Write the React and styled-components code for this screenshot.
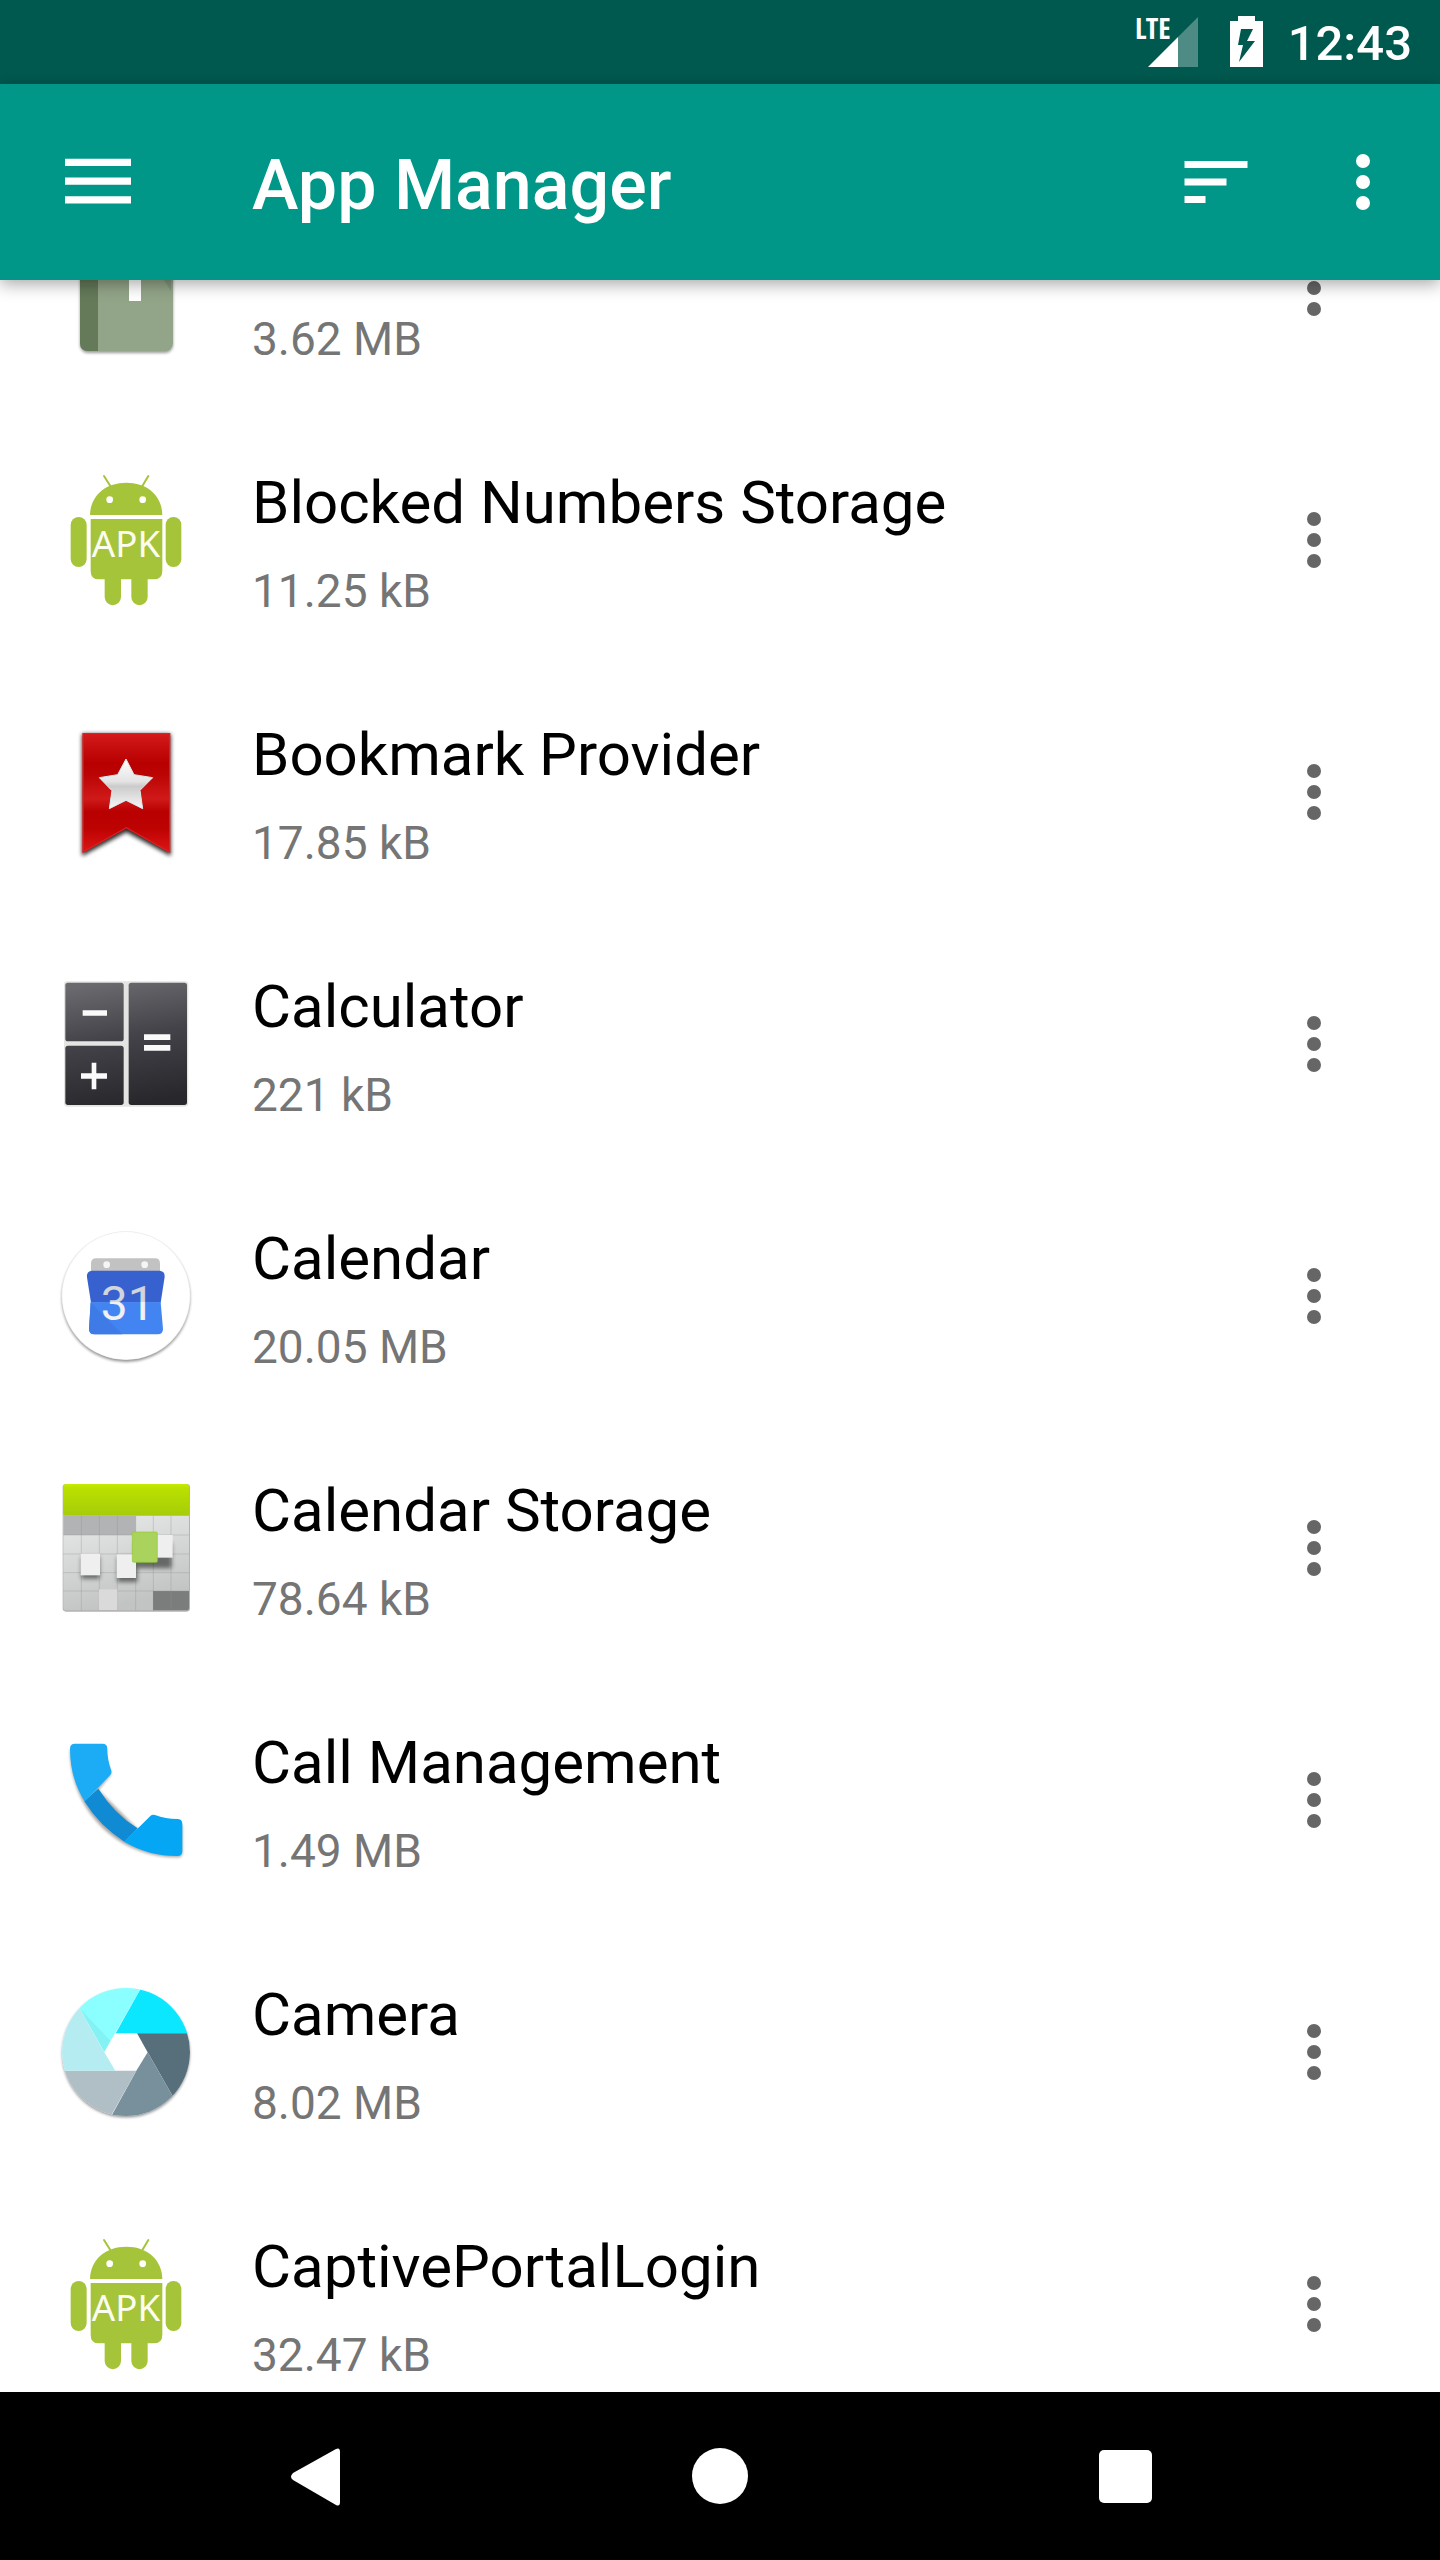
import React, { useLayoutEffect, useRef } from "react"
import styled, { createGlobalStyle } from "styled-components"


const GlobalStyle = createGlobalStyle`
  * {
    box-sizing: border-box;
  }
  body {
    margin: 0;
    background: #fff;
    font-family: Roboto, "Liberation Sans", sans-serif;
  }
`

const Screen = styled.div`
  display: flex;
  flex-direction: column;
  width: 100%;
  height: 100vh;
  background: #fff;
`

const StatusBar = styled.div`
  display: flex;
  flex: none;
  align-items: center;
  justify-content: flex-end;
  height: 84px;
  padding-right: 28px;
  background: #00594f;
  color: #fff;
`

const SignalIcon = styled.svg`
  width: 64px;
  height: 84px;
  margin-right: 28px;
`

const BatteryIcon = styled.svg`
  width: 36px;
  height: 84px;
  margin-right: 24px;
`

const Clock = styled.time`
  padding-top: 4px;
  font-size: 49px;
  font-weight: 500;
  line-height: 80px;
`

const Toolbar = styled.header`
  display: flex;
  flex: none;
  align-items: center;
  height: 196px;
  padding: 0 28px 0 48px;
  background: #009788;
  color: #fff;
  box-shadow: 0 4px 16px rgba(0, 0, 0, 0.35);
  z-index: 1;
`

const IconButton = styled.button`
  display: flex;
  flex: none;
  align-items: center;
  justify-content: center;
  width: ${props => props.$width || 100}px;
  height: 112px;
  padding: 0;
  border: 0;
  background: none;
  color: inherit;
  cursor: pointer;
  svg {
    width: 84px;
    height: 84px;
    fill: currentColor;
  }
`

const Actions = styled.div`
  display: flex;
  gap: 42px;
`

const Heading = styled.h1`
  flex: 1;
  margin: 0 0 0 104px;
  padding-top: 6px;
  font-size: 70px;
  font-weight: 500;
  line-height: 84px;
`

const Scroller = styled.main`
  flex: 1;
  min-height: 0;
  overflow-y: auto;
  scrollbar-width: none;
`

const List = styled.ul`
  margin: 0;
  padding: 0;
  list-style: none;
`

const Row = styled.li`
  display: flex;
  align-items: center;
  height: 252px;
  padding: 0 76px 0 56px;
  color: #666;
`

const AppIcon = styled.svg`
  flex: none;
  width: 140px;
  height: 140px;
  overflow: visible;
`

const Info = styled.div`
  flex: 1;
  min-width: 0;
  margin-left: 56px;
  padding-top: 14px;
`

const Name = styled.p`
  height: 84px;
  margin: 0;
  color: #000;
  font-size: 60px;
  line-height: 84px;
`

const Size = styled.p`
  margin: 4px 0 0;
  color: #757575;
  font-size: 46px;
  line-height: 84px;
`

const NavBar = styled.nav`
  display: flex;
  flex: none;
  align-items: center;
  justify-content: center;
  height: 168px;
  gap: 294px;
  background: #000;
  color: #fff;
`

const Dots = () => (
  <svg viewBox="0 0 24 24" aria-hidden="true">
    <circle cx="12" cy="6" r="2" />
    <circle cx="12" cy="12" r="2" />
    <circle cx="12" cy="18" r="2" />
  </svg>
)

const BookArt = () => (
  <AppIcon viewBox="56 218 140 140" aria-hidden="true">
    <defs>
      <filter id="bookShadow" x="-10%" y="-10%" width="120%" height="120%">
        <feGaussianBlur stdDeviation="1.5" />
      </filter>
    </defs>
    <rect x="80" y="226" width="93" height="127" rx="8" opacity="0.4" filter="url(#bookShadow)" />
    <rect x="80" y="224" width="93" height="127" rx="8" fill="#92a588" />
    <path d="M98 224v127H88q-8 0-8-8V232q0-8 8-8z" fill="#647a59" />
    <path d="M129 240h12v61h-12z" fill="#fff" />
    <path d="M164 280h7v11z" fill="#82957c" />
  </AppIcon>
)

const ApkArt = () => (
  <AppIcon viewBox="48 60 420 420" aria-hidden="true">
    <g fill="#a6c43a">
      <path d="M150 195C151 138 195 98 259 98s107 40 108 97z" />
      <path d="M192 78l19 30M325 78l-18 30" stroke="#a6c43a" strokeWidth="6" strokeLinecap="round" />
      <path d="M152 207h215v155q0 26-26 26h-18v53a24 24 0 0 1-49 0v-53h-31v53a24 24 0 0 1-49 0v-53h-18q-24 0-24-26z" />
      <rect x="92" y="201" width="48" height="150" rx="24" />
      <rect x="377" y="201" width="47" height="150" rx="23" />
    </g>
    <circle cx="209" cy="149" r="10" fill="#fff" />
    <circle cx="308" cy="149" r="10" fill="#fff" />
    <text x="258" y="321" textAnchor="middle" fill="#fbfdf0" fontFamily="Noto Sans, sans-serif" fontSize="110">APK</text>
  </AppIcon>
)

const BookmarkArt = () => (
  <AppIcon viewBox="48 66 420 420" aria-hidden="true">
    <defs>
      <linearGradient id="ribbon" x1="0" y1="0" x2="0" y2="1">
        <stop offset="0" stopColor="#d41a1a" />
        <stop offset="0.25" stopColor="#b80000" />
        <stop offset="0.35" stopColor="#bb0404" />
        <stop offset="0.55" stopColor="#d01a1a" />
        <stop offset="0.66" stopColor="#b90000" />
        <stop offset="0.8" stopColor="#bd0202" />
        <stop offset="1" stopColor="#dc1616" />
      </linearGradient>
      <linearGradient id="star" x1="0" y1="0" x2="0" y2="1">
        <stop offset="0" stopColor="#fff" />
        <stop offset="0.45" stopColor="#e4e4e4" />
        <stop offset="0.55" stopColor="#cbcbcb" />
        <stop offset="1" stopColor="#f8f8f8" />
      </linearGradient>
      <filter id="soft" x="-20%" y="-20%" width="140%" height="140%">
        <feGaussianBlur stdDeviation="7" />
      </filter>
    </defs>
    <path d="M126 102h266v366l-133-72-133 72z" opacity="0.85" filter="url(#soft)" />
    <path d="M129 101h260v355l-130-73-130 73z" fill="url(#ribbon)" stroke="#e31e1e" strokeWidth="4" />
    <path d="M258 177l24 47 56 9-38 38 8 55-50-25-50 25 8-54-38-39 55-9z" fill="url(#star)" stroke="#d7eeee" strokeWidth="3" />
  </AppIcon>
)

const CalculatorArt = () => (
  <AppIcon viewBox="48 57 420 420" aria-hidden="true">
    <defs>
      <linearGradient id="keys" gradientUnits="userSpaceOnUse" x1="200" y1="82" x2="260" y2="450">
        <stop offset="0" stopColor="#69696e" />
        <stop offset="0.45" stopColor="#434349" />
        <stop offset="1" stopColor="#28272c" />
      </linearGradient>
    </defs>
    <rect x="72" y="79" width="373" height="376" rx="10" fill="#e4e4e2" />
    <g fill="url(#keys)">
      <rect x="76" y="83" width="175" height="176" rx="8" />
      <rect x="76" y="272" width="175" height="178" rx="8" />
      <rect x="266" y="83" width="175" height="367" rx="8" />
    </g>
    <path d="M128 166h73v16h-73zM312 238h79v17h-79zM312 270h79v17h-79zM155 323h14v32h32v16h-32v32h-14v-32h-32v-16h32z" fill="#fafafa" />
  </AppIcon>
)

const CalendarArt = () => (
  <AppIcon viewBox="48 63 420 420" aria-hidden="true">
    <defs>
      <filter id="discShadow" x="-10%" y="-10%" width="120%" height="120%">
        <feGaussianBlur stdDeviation="4" />
      </filter>
      <linearGradient id="digits" gradientUnits="userSpaceOnUse" x1="0" y1="240" x2="0" y2="345">
        <stop offset="0.48" stopColor="#d3d5dc" />
        <stop offset="0.49" stopColor="#f1f1f1" />
      </linearGradient>
    </defs>
    <circle cx="258" cy="278" r="192" opacity="0.45" filter="url(#discShadow)" />
    <circle cx="258" cy="272" r="193" fill="#ececec" />
    <circle cx="258" cy="272" r="191" fill="#fff" />
    <path d="M153 200v-24q0-16 16-16h176q15 0 15 16v24z" fill="#c2c2c2" />
    <circle cx="200" cy="179" r="10" fill="#f5f5f5" />
    <circle cx="314" cy="179" r="10" fill="#f5f5f5" />
    <path d="M157 197h200q18 0 17 18l-12 78H153l-12-76q-2-20 16-20z" fill="#3661cf" />
    <path d="M152 292h210l7 80q0 16-16 16H163q-16 0-16-16z" fill="#4384f3" />
    <path d="M152 292l95 96h-84q-16 0-16-16z" fill="#3f7be6" />
    <text x="263" y="344" textAnchor="middle" fill="url(#digits)" fontSize="144">31</text>
  </AppIcon>
)

const CalendarStorageArt = () => (
  <AppIcon viewBox="48 54 420 420" aria-hidden="true">
    <defs>
      <linearGradient id="band" x1="0" y1="0" x2="0" y2="1">
        <stop offset="0" stopColor="#c6ec00" />
        <stop offset="0.15" stopColor="#b9e000" />
        <stop offset="1" stopColor="#a7cc0a" />
      </linearGradient>
      <linearGradient id="sheet" x1="0" y1="0" x2="0.3" y2="1">
        <stop offset="0" stopColor="#e9e9e9" />
        <stop offset="0.5" stopColor="#d6d8d8" />
        <stop offset="1" stopColor="#c2c4c4" />
      </linearGradient>
      <filter id="tileShadow" x="-40%" y="-40%" width="180%" height="180%">
        <feGaussianBlur stdDeviation="7" />
      </filter>
    </defs>
    <rect x="68" y="72" width="382" height="383" rx="10" opacity="0.3" />
    <rect x="70" y="160" width="377" height="291" rx="8" fill="url(#sheet)" />
    <path d="M70 167h217v58H70z" fill="#b2b3b5" />
    <path d="M339 393h108v50q0 8-8 8H339z" fill="#7a7d7c" />
    <path d="M124 167v284M178 167v284M232 167v284M287 167v284M340 167v284M393 167v284M70 225h377M70 282h377M70 338h377M70 393h377" stroke="#8c8f90" strokeOpacity="0.5" strokeWidth="2" />
    <path d="M70 167V80q0-8 8-8h361q8 0 8 8v87z" fill="url(#band)" />
    <path d="M285 250h110v75H285zM124 290h55v66h-55zM232 290h60v76h-60z" opacity="0.5" filter="url(#tileShadow)" />
    <g fill="#efefef">
      <path d="M122 281h58v65h-58z" />
      <path d="M230 283h58v71h-58z" />
      <path d="M345 225h53v68h-53z" />
      <path d="M177 388h55v62h-55z" fill="#dadada" />
    </g>
    <rect x="277" y="216" width="75" height="91" rx="4" fill="#a9d35d" stroke="#93cc2c" strokeWidth="2" />
  </AppIcon>
)

const PhoneArt = () => (
  <AppIcon viewBox="48 60 420 420" aria-hidden="true">
    <defs>
      <filter id="phoneShadow" x="-10%" y="-10%" width="120%" height="120%">
        <feGaussianBlur stdDeviation="4" />
      </filter>
    </defs>
    <path d="M90 118C90 300 230 442 412 442q15 0 15-14V345H340L293 358 175 240l38-46-11-40z" opacity="0.35" filter="url(#phoneShadow)" />
    <path d="M175 236q48 76 118 119l-40 40q-74-47-120-121z" fill="#0f8ad3" />
    <path d="M105 101h82q15 0 15 15 0 34 12 66 2 8-4 14L134 274Q90 204 90 116q0-15 15-15z" fill="#1cacf5" />
    <path d="M253 395l78-77q6-6 14-3 32 12 67 12 15 0 15 15v81q0 15-15 15-87 0-159-43z" fill="#05a7f4" />
  </AppIcon>
)

const CameraArt = () => (
  <AppIcon viewBox="48 51 420 420" aria-hidden="true">
    <defs>
      <clipPath id="lens">
        <circle cx="258" cy="261" r="192" />
      </clipPath>
      <filter id="lensShadow" x="-10%" y="-10%" width="120%" height="120%">
        <feGaussianBlur stdDeviation="5" />
      </filter>
    </defs>
    <circle cx="258" cy="266" r="191" opacity="0.45" filter="url(#lensShadow)" />
    <circle cx="258" cy="261" r="192" fill="#fff" />
    <g clipPath="url(#lens)">
      <path d="M227 205L308 60H460v145z" fill="#0be7ff" />
      <path d="M291 205h180v220h-55L323 262z" fill="#566f7b" />
      <path d="M323 262l93 163-50 50H202l87-158z" fill="#78909c" />
      <path d="M289 317l-90 160H50V317z" fill="#b0bec5" />
      <path d="M226 317H50V100l61 17 82 145z" fill="#b5ecf1" />
      <path d="M193 260l-85-149 60-61h146z" fill="#8bffff" />
      <path d="M193 260l-74-130 92 97z" fill="#84f2f2" />
    </g>
  </AppIcon>
)

const apps = [
  { id: "book", name: "", size: "3.62 MB", Art: BookArt },
  { id: "blocked", name: "Blocked Numbers Storage", size: "11.25 kB", Art: ApkArt },
  { id: "bookmark", name: "Bookmark Provider", size: "17.85 kB", Art: BookmarkArt },
  { id: "calculator", name: "Calculator", size: "221 kB", Art: CalculatorArt },
  { id: "calendar", name: "Calendar", size: "20.05 MB", Art: CalendarArt },
  { id: "calendar-storage", name: "Calendar Storage", size: "78.64 kB", Art: CalendarStorageArt },
  { id: "call", name: "Call Management", size: "1.49 MB", Art: PhoneArt },
  { id: "camera", name: "Camera", size: "8.02 MB", Art: CameraArt },
  { id: "captive", name: "CaptivePortalLogin", size: "32.47 kB", Art: ApkArt },
]

const AppRow = ({ name, size, Art }) => (
  <Row>
    <Art />
    <Info>
      <Name>{name}</Name>
      <Size>{size}</Size>
    </Info>
    <IconButton aria-label={`Options ${name}`}>
      <Dots />
    </IconButton>
  </Row>
)

const App = () => {
  const scroller = useRef(null)

  // the list opens part way down its first row
  useLayoutEffect(() => {
    scroller.current.scrollTop = 118
  }, [])

  return(
    <>
      <GlobalStyle />
      <Screen>
        <StatusBar>
          <SignalIcon viewBox="0 0 64 84" aria-hidden="true">
            <path d="M62 17v50H42V37z" fill="#fff" opacity="0.3" />
            <path d="M42 37v30H12z" fill="#fff" />
            <text x="-1" y="39" fill="#fff" fontFamily="Open Sans Condensed, Roboto Condensed, Roboto, sans-serif" fontSize="29" fontWeight="700" fontStretch="condensed">LTE</text>
          </SignalIcon>
          <BatteryIcon viewBox="0 0 36 84" aria-hidden="true">
            <path d="M10 16h17v5h8v46H2V21h8z" fill="#fff" />
            <path d="M13 29h12l-6 12h8L11 62l4-17h-5z" fill="#00594f" />
          </BatteryIcon>
          <Clock>12:43</Clock>
        </StatusBar>
        <Toolbar>
          <IconButton $width={100} aria-label="Menu">
            <svg viewBox="0 0 84 84">
              <path d="M9 18.7h66v7.3H9zM9 37.5h66v7.3H9zM9 56.2h66v7.3H9z" />
            </svg>
          </IconButton>
          <Heading>App Manager</Heading>
          <Actions>
            <IconButton $width={112} aria-label="Sort">
              <svg viewBox="0 0 24 24">
                <path d="M3 18h6v-2H3v2zM3 6v2h18V6H3zm0 7h12v-2H3v2z" />
              </svg>
            </IconButton>
            <IconButton $width={98} aria-label="More options">
              <Dots />
            </IconButton>
          </Actions>
        </Toolbar>
        <Scroller ref={scroller}>
          <List>
            {apps.map(app => (
              <AppRow key={app.id} {...app} />
            ))}
          </List>
        </Scroller>
        <NavBar>
          <IconButton $width={112} aria-label="Back">
            <svg viewBox="0 0 84 84">
              <path d="M21 39L64 15q4-2 4 3v50q0 5-4 3L21 46q-4-3 0-7z" />
            </svg>
          </IconButton>
          <IconButton $width={112} aria-label="Home">
            <svg viewBox="0 0 84 84">
              <circle cx="42" cy="42" r="28" />
            </svg>
          </IconButton>
          <IconButton $width={112} aria-label="Recent apps">
            <svg viewBox="0 0 84 84">
              <rect x="15" y="16" width="53" height="53" rx="5" />
            </svg>
          </IconButton>
        </NavBar>
      </Screen>
    </>
  )
}

export default App
